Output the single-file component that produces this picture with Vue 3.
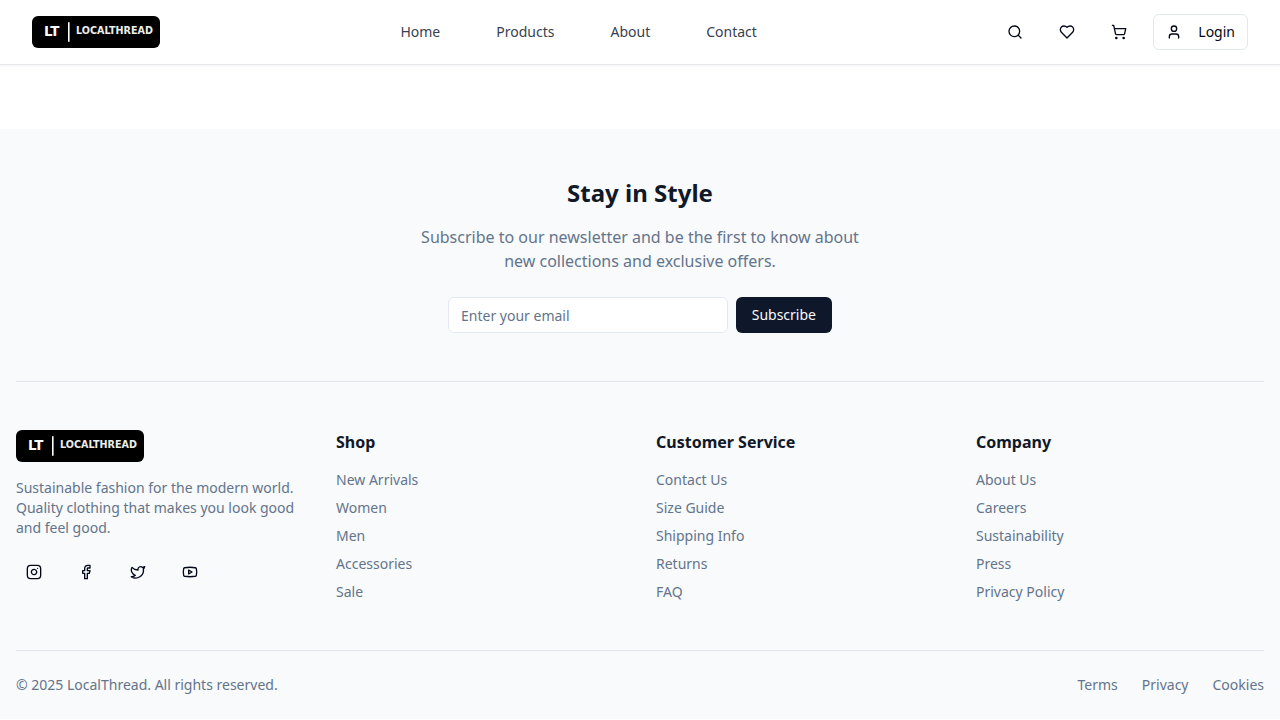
<script setup>
import { h } from 'vue'

const nav = ['Home', 'Products', 'About', 'Contact']
const columns = [
  { title: 'Shop', links: ['New Arrivals', 'Women', 'Men', 'Accessories', 'Sale'] },
  { title: 'Customer Service', links: ['Contact Us', 'Size Guide', 'Shipping Info', 'Returns', 'FAQ'] },
  { title: 'Company', links: ['About Us', 'Careers', 'Sustainability', 'Press', 'Privacy Policy'] },
]
const legal = ['Terms', 'Privacy', 'Cookies']

const shapes = {
  search: [['circle', { cx: 11, cy: 11, r: 8 }], ['path', { d: 'm21 21-4.3-4.3' }]],
  heart: [['path', { d: 'M19 14c1.49-1.46 3-3.21 3-5.5A5.5 5.5 0 0 0 16.5 3c-1.76 0-3 .5-4.5 2-1.5-1.5-2.74-2-4.5-2A5.5 5.5 0 0 0 2 8.5c0 2.3 1.5 4.05 3 5.5l7 7Z' }]],
  cart: [['circle', { cx: 8, cy: 21, r: 1 }], ['circle', { cx: 19, cy: 21, r: 1 }], ['path', { d: 'M2.05 2.05h2l2.66 12.42a2 2 0 0 0 2 1.58h9.78a2 2 0 0 0 1.95-1.57l1.65-7.43H5.12' }]],
  user: [['path', { d: 'M19 21v-2a4 4 0 0 0-4-4H9a4 4 0 0 0-4 4v2' }], ['circle', { cx: 12, cy: 7, r: 4 }]],
  instagram: [['rect', { x: 2, y: 2, width: 20, height: 20, rx: 5 }], ['path', { d: 'M16 11.37A4 4 0 1 1 12.63 8 4 4 0 0 1 16 11.37z' }], ['path', { d: 'M17.5 6.5h.01' }]],
  facebook: [['path', { d: 'M18 2h-3a5 5 0 0 0-5 5v3H7v4h3v8h4v-8h3l1-4h-4V7a1 1 0 0 1 1-1h3z' }]],
  twitter: [['path', { d: 'M22 4s-.7 2.1-2 3.4c1.6 10-9.4 17.3-18 11.6 2.2.1 4.4-.6 6-2C3 15.5.5 9.6 3 5c2.2 2.6 5.6 4.1 9 4-.9-4.2 4-6.6 7-3.8 1.1 0 3-1.2 3-1.2z' }]],
  youtube: [['path', { d: 'M2.5 17a24.12 24.12 0 0 1 0-10 2 2 0 0 1 1.4-1.4 49.56 49.56 0 0 1 16.2 0A2 2 0 0 1 21.5 7a24.12 24.12 0 0 1 0 10 2 2 0 0 1-1.4 1.4 49.55 49.55 0 0 1-16.2 0A2 2 0 0 1 2.5 17' }], ['path', { d: 'm10 15 5-3-5-3z' }]],
}

const Icon = (props) =>
  h(
    'svg',
    { width: 16, height: 16, viewBox: '0 0 24 24', fill: 'none', stroke: 'currentColor', 'stroke-width': 2, 'stroke-linecap': 'round', 'stroke-linejoin': 'round' },
    shapes[props.name].map(([tag, attrs]) => h(tag, attrs)),
  )
Icon.props = ['name']

const Logo = () =>
  h('svg', { width: 128, height: 32, viewBox: '0 0 128 32', 'font-family': 'DejaVu Sans, sans-serif' }, [
    h('rect', { width: 128, height: 32, rx: 6, fill: '#000' }),
    h('text', { x: 11.9, y: 20.3, 'font-size': 13.4, 'font-weight': 700, fill: '#fff' }, 'LT'),
    h('path', { d: 'M36.8 6.2v19.6', stroke: '#fff', 'stroke-width': 1.6 }),
    h('text', { x: 44, y: 17.9, 'font-size': 9.6, 'font-weight': 700, fill: '#ededed', textLength: 77 }, 'LOCALTHREAD'),
  ])
</script>

<template>
  <div class="page">
    <header class="header">
      <a class="logo"><Logo /></a>
      <nav class="nav">
        <a v-for="item in nav" :key="item">{{ item }}</a>
      </nav>
      <div class="actions">
        <button v-for="n in ['search', 'heart', 'cart']" :key="n" class="icon-btn"><Icon :name="n" /></button>
        <button class="login"><Icon name="user" /><span>Login</span></button>
      </div>
    </header>

    <footer class="footer">
      <section class="newsletter">
        <h2>Stay in Style</h2>
        <p>Subscribe to our newsletter and be the first to know about new collections and exclusive offers.</p>
        <form class="form" @submit.prevent>
          <input type="email" placeholder="Enter your email" />
          <button>Subscribe</button>
        </form>
      </section>
      <section class="columns">
        <div>
          <a class="logo"><Logo /></a>
          <p class="about">Sustainable fashion for the modern world. Quality clothing that makes you look good and feel good.</p>
          <div class="social">
            <button v-for="n in ['instagram', 'facebook', 'twitter', 'youtube']" :key="n" class="icon-btn"><Icon :name="n" /></button>
          </div>
        </div>
        <div v-for="col in columns" :key="col.title">
          <h3>{{ col.title }}</h3>
          <ul>
            <li v-for="link in col.links" :key="link"><a>{{ link }}</a></li>
          </ul>
        </div>
      </section>
      <section class="bottom">
        <p>© 2025 LocalThread. All rights reserved.</p>
        <div class="legal"><a v-for="item in legal" :key="item">{{ item }}</a></div>
      </section>
    </footer>
  </div>
</template>

<style>
body { background: #fff; }
</style>

<style scoped>
.page, .page button, .page input { font-family: "Noto Sans", sans-serif; }
.page { color: #111827; font-size: 14px; line-height: 20px; }
.page * { box-sizing: border-box; }
h2, h3, p, ul { margin: 0; padding: 0; }
ul { list-style: none; }
button { border: 0; padding: 0; background: none; color: #020817; font-size: 14px; line-height: 20px; }
svg { display: block; flex: none; }
.header { display: flex; align-items: center; justify-content: space-between; height: 65px; padding: 0 32px; background: #fff; border-bottom: 1px solid #e5e7eb; box-shadow: 0 1px 2px rgba(0, 0, 0, .05); }
.logo { display: block; width: 128px; }
.nav { display: flex; gap: 56px; color: #374151; }
.actions { display: flex; gap: 16px; }
.icon-btn { display: flex; align-items: center; justify-content: center; width: 36px; height: 36px; }
.login { display: flex; align-items: center; gap: 16px; height: 36px; padding: 0 12px; border: 1px solid #e2e8f0; border-radius: 6px; background: #fff; }
.footer { margin-top: 64px; height: 590px; padding: 0 16px; background: #f8fafc; }
.newsletter { display: flex; flex-direction: column; align-items: center; height: 253px; padding-top: 48px; border-bottom: 1px solid #e2e8f0; text-align: center; }
h2 { font-size: 24px; line-height: 32px; font-weight: 700; }
.newsletter p { width: 448px; margin-top: 16px; color: #64748b; font-size: 16px; line-height: 24px; }
.form { display: flex; gap: 8px; width: 384px; margin-top: 24px; }
.form input { flex: 1; min-width: 0; height: 36px; padding: 4px 12px; border: 1px solid #e2e8f0; border-radius: 6px; background: #fff; font-size: 14px; line-height: 20px; }
.form input::placeholder { color: #64748b; opacity: 1; }
.form button { height: 36px; padding: 0 16px; border-radius: 6px; background: #0f172a; color: #f8fafc; }
.columns { display: grid; grid-template-columns: repeat(4, 1fr); gap: 32px; padding: 48px 0; }
.about { margin-top: 16px; color: #64748b; }
.social { display: flex; gap: 16px; margin-top: 16px; }
h3 { font-size: 16px; line-height: 24px; font-weight: 700; }
ul { display: grid; gap: 8px; margin-top: 16px; color: #64748b; }
li { height: 20px; }
.bottom { display: flex; justify-content: space-between; padding-top: 24px; border-top: 1px solid #e2e8f0; color: #64748b; }
.legal { display: flex; gap: 24px; }
</style>
